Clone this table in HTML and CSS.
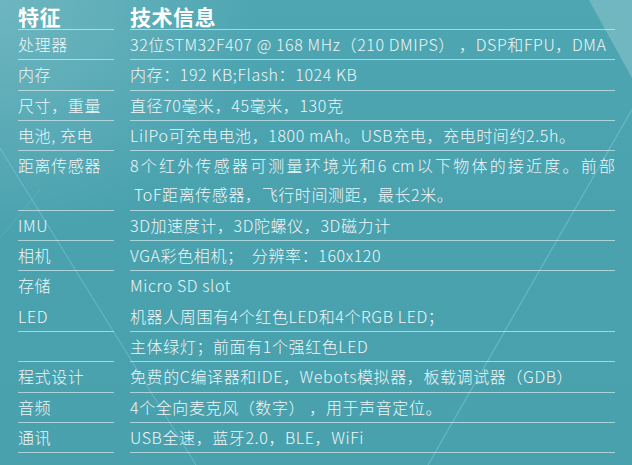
FILE: index.html
```html
<!DOCTYPE html>
<html lang="zh">
<head>
<meta charset="utf-8">
<link rel="stylesheet" href="styles.css">
</head>
<body>
<div class="page">
  <svg class="deco" viewBox="0 0 632 465" preserveAspectRatio="none" aria-hidden="true">
    <defs>
      <radialGradient id="glow" cx="0" cy="0" r="1" gradientUnits="userSpaceOnUse" gradientTransform="translate(0 0) scale(260 240)">
        <stop offset="0" stop-color="#ffffff" stop-opacity="0.18"/>
        <stop offset="1" stop-color="#ffffff" stop-opacity="0"/>
      </radialGradient>
    </defs>
    <rect x="0" y="0" width="632" height="465" fill="url(#glow)"/>
    <polygon points="589,0 632,0 632,78" fill="#ffffff" fill-opacity="0.2"/>
    <line x1="642" y1="92" x2="428" y2="465" stroke="#8ccbe6" stroke-opacity="0.45" stroke-width="1.2"/>
    <line x1="0" y1="148" x2="196" y2="465" stroke="#8ccbe6" stroke-opacity="0.4" stroke-width="1.2"/>
    <line x1="0" y1="238" x2="40" y2="190" stroke="#8ccbe6" stroke-opacity="0.25" stroke-width="1"/>
  </svg>
  <div class="spec">
    <div class="cell head">特征</div>
    <div class="cell head">技术信息</div>

    <div class="cell">处理器</div>
    <div class="cell">32位STM32F407 @ 168 MHz（210 DMIPS）&nbsp;，DSP和FPU，DMA</div>

    <div class="cell">内存</div>
    <div class="cell">内存：192 KB;Flash：1024 KB</div>

    <div class="cell">尺寸，重量</div>
    <div class="cell">直径70毫米，45毫米，130克</div>

    <div class="cell">电池, 充电</div>
    <div class="cell">LiIPo可充电电池，1800 mAh。USB充电，充电时间约2.5h。</div>

    <div class="cell">距离传感器</div>
    <div class="cell">
      <span class="line-just">8个红外传感器可测量环境光和6 cm以下物体的接近度。前部</span>
      <span class="line-indent">ToF距离传感器，飞行时间测距，最长2米。</span>
    </div>

    <div class="cell">IMU</div>
    <div class="cell">3D加速度计，3D陀螺仪，3D磁力计</div>

    <div class="cell">相机</div>
    <div class="cell">VGA彩色相机；&nbsp; 分辨率：160x120</div>

    <div class="cell open">存储</div>
    <div class="cell open">Micro SD slot</div>

    <div class="cell">LED</div>
    <div class="cell">机器人周围有4个红色LED和4个RGB LED；</div>

    <div class="cell"></div>
    <div class="cell">主体绿灯；前面有1个强红色LED</div>

    <div class="cell">程式设计</div>
    <div class="cell">免费的C编译器和IDE，Webots模拟器，板载调试器（GDB）</div>

    <div class="cell">音频</div>
    <div class="cell">4个全向麦克风（数字） ，用于声音定位。</div>

    <div class="cell">通讯</div>
    <div class="cell">USB全速，蓝牙2.0，BLE，WiFi</div>
  </div>
</div>
</body>
</html>
```

FILE: styles.css
```css
html, body {
  margin: 0;
  padding: 0;
}

body {
  width: 632px;
  height: 465px;
  overflow: hidden;
  background: #4aa2af;
  font-family: "Noto Sans CJK SC", "Noto Sans", sans-serif;
  color: #eef6f7;
}

.page {
  position: relative;
  width: 632px;
  height: 465px;
  background: linear-gradient(180deg, #4ea6b2 0%, #4aa2af 45%, #49a1ad 100%);
}

.deco {
  position: absolute;
  left: 0;
  top: 0;
  width: 632px;
  height: 465px;
  z-index: 0;
}

.spec {
  position: relative;
  z-index: 1;
  display: grid;
  grid-template-columns: 96px 485px;
  column-gap: 16px;
  padding: 3px 0 0 18px;
}

.cell {
  font-size: 16px;
  font-weight: 300;
  line-height: 29.3px;
  letter-spacing: 0.6px;
  border-bottom: 1px solid rgba(235, 245, 246, 0.6);
  white-space: nowrap;
}

.cell.head {
  font-size: 21px;
  font-weight: 700;
  line-height: 26px;
  letter-spacing: 0.5px;
  color: #ffffff;
}

.cell.open {
  border-bottom-color: transparent;
}

.line-just {
  display: block;
  text-align: justify;
  text-align-last: justify;
  letter-spacing: 0;
}

.line-indent {
  display: block;
  padding-left: 4px;
}
```
